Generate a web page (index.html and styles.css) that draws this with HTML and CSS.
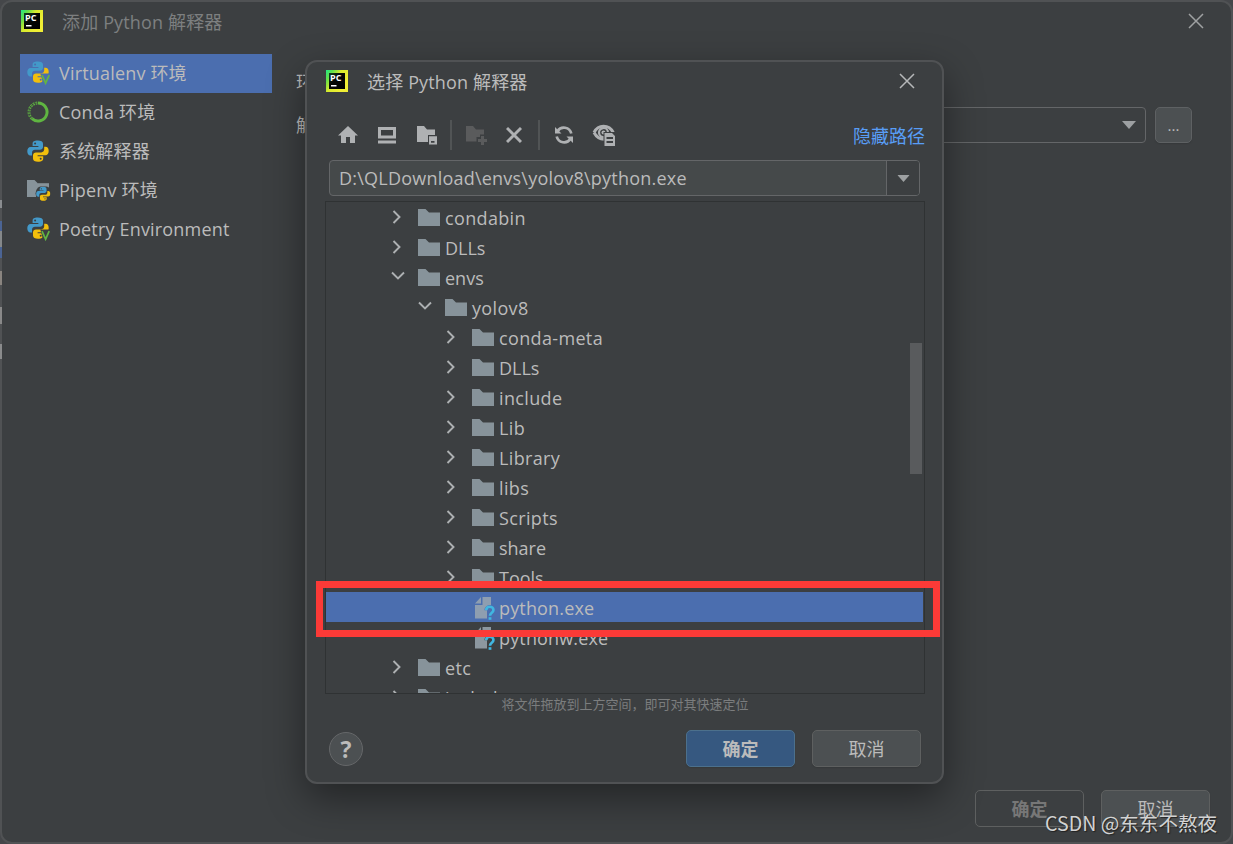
FILE: index.html
```
<!DOCTYPE html>
<html lang="zh-CN">
<head>
<meta charset="utf-8">
<title>添加 Python 解释器</title>
<link rel="stylesheet" href="styles.css">
</head>
<body>
<svg class="defs" width="0" height="0">
  <defs>
    <linearGradient id="pcg" x1="0" y1="0" x2="0.9" y2="0.6">
      <stop offset="0" stop-color="#21e789"/><stop offset="0.25" stop-color="#5fe04a"/><stop offset="0.55" stop-color="#d8ea2d"/><stop offset="1" stop-color="#f0ee35"/>
    </linearGradient>
    <linearGradient id="pcd" x1="0" y1="0" x2="1" y2="1">
      <stop offset="0" stop-color="#12401f"/><stop offset="0.4" stop-color="#050805"/><stop offset="1" stop-color="#000"/>
    </linearGradient>
    <symbol id="pycharm" viewBox="0 0 22 22">
      <rect width="22" height="22" fill="url(#pcg)"/>
      <rect x="3" y="3" width="16" height="16" fill="url(#pcd)"/>
      <rect x="5" y="15" width="5.500" height="1.500" fill="#fff"/>
    </symbol>
    <symbol id="py" viewBox="0 0 22 22">
      <path fill="#4399c9" d="M10.8 0.5C7 0.5 5.600 1.700 5.600 3.700V6H11.400V7H3.600C1.500 7 0.300 8.700 0.300 11.300C0.300 14 1.500 15.500 3.400 15.500H5V12.700C5 11 6.300 9.800 8 9.800H13C14.600 9.800 16 8.600 16 7V3.700C16 1.600 14 0.500 10.800 0.500Z"/>
      <circle cx="8.100" cy="3.500" r="1" class="eye"/>
      <path fill="#f2bf0c" d="M11 21.700C14.800 21.700 16.200 20.500 16.200 18.500V16.200H10.600V15.200H18.300C20.500 15.200 21.700 13.600 21.700 11C21.700 8.200 20.400 6.800 18.600 6.800H17.200V9.300C17.200 11 15.900 12.400 14.200 12.400H9C7.300 12.400 6 13.600 6 15.200V18.500C6 20.600 8 21.700 11 21.700Z"/>
      <circle cx="13.700" cy="18.700" r="1" class="eye"/>
    </symbol>
    <symbol id="pyv" viewBox="0 0 24 24">
      <use href="#py" width="22" height="22"/>
      <path d="M13.300 12.600H24V24H16.500Z" class="cut"/>
      <path d="M15 14.200L18.600 22.200L22.200 14.200" fill="none" stroke="#62b543" stroke-width="1.700"/>
    </symbol>
    <symbol id="conda" viewBox="0 0 22 22">
      <path d="M11 2A9 9 0 1 1 5 17.700" fill="none" stroke="#5fb541" stroke-width="3"/>
      <path d="M5 17.700A9 9 0 0 1 10.500 2" fill="none" stroke="#5fb541" stroke-width="2.800" stroke-dasharray="1.800 .9"/>
      <path d="M5 17.700A9 9 0 0 1 10 2" fill="none" stroke="#3c3f41" stroke-width="0.600"/>
    </symbol>
    <symbol id="folder" viewBox="0 0 22 17">
      <path d="M0 0H7.500L11 3.400H22V17H0Z" fill="#87939a"/>
    </symbol>
    <symbol id="right" viewBox="0 0 10 14"><path d="M1.500 1L7.500 7L1.500 13" fill="none" stroke="#adb0b2" stroke-width="1.900"/></symbol>
    <symbol id="down" viewBox="0 0 14 10"><path d="M1 1.500L7 7.500L13 1.500" fill="none" stroke="#adb0b2" stroke-width="1.900"/></symbol>
    <symbol id="unknown" viewBox="0 0 22 24">
      <path d="M1 7.500L7 1V7.500Z" fill="#9aa7b0" opacity=".85"/>
      <path d="M8.500 1H17V9C13 9 10.500 11 10.500 14.300H13V22.500H1V9H8.500Z" fill="#9aa7b0" opacity=".85"/>
      <path d="M12.200 14.200C12.200 9.600 19.400 9.700 19.400 13.900C19.400 17 16 16.500 16 19.800" fill="none" stroke="#40b6e0" stroke-width="2.700"/>
      <rect x="14.600" y="21.200" width="2.800" height="2.600" fill="#40b6e0"/>
    </symbol>
    <symbol id="cross" viewBox="0 0 16 16"><path d="M1 1L15 15M15 1L1 15" stroke="currentColor" stroke-width="1.500"/></symbol>
    <symbol id="caret" viewBox="0 0 14 8"><path d="M0 0H14L7 8Z" fill="#9da0a2"/></symbol>
  </defs>
</svg>

<div class="window">
  <header class="titlebar outer">
    <span class="logo"><svg width="22" height="22"><use href="#pycharm"/></svg><b>PC</b></span>
    <span class="title dim">添加 Python 解释器</span>
    <svg class="close" width="16" height="16"><use href="#cross"/></svg>
  </header>
  <main class="content">
    <nav class="side">
      <div class="env active"><svg width="24" height="24"><use href="#pyv"/></svg><span>Virtualenv 环境</span></div>
      <div class="env"><svg width="22" height="22"><use href="#conda"/></svg><span>Conda 环境</span></div>
      <div class="env"><svg width="22" height="22"><use href="#py"/></svg><span>系统解释器</span></div>
      <div class="env"><svg width="24" height="24" viewBox="0 0 24 24"><path d="M0 2H7.500L11 5.400H22V11L10 19H0Z" fill="#87939a"/><circle cx="16.500" cy="15.500" r="8" fill="#3c3f41"/><path d="M11 5.400H22V8.500H11Z" fill="#87939a"/><use href="#py" x="9" y="8.500" width="14.500" height="14.500"/></svg><span>Pipenv 环境</span></div>
      <div class="env"><svg width="24" height="24"><use href="#pyv"/></svg><span>Poetry Environment</span></div>
    </nav>
    <section class="form">
      <div class="label">环境</div>
      <div class="line"><span class="label">解释器</span><div class="combo"><svg width="14" height="8"><use href="#caret"/></svg></div><button class="more">...</button></div>
    </section>
  </main>
  <footer class="actions">
    <button class="btn disabled">确定</button>
    <button class="btn">取消</button>
  </footer>
</div>
<div class="edge"></div>

<div class="dialog">
  <header class="titlebar inner">
    <span class="logo"><svg width="22" height="22"><use href="#pycharm"/></svg><b>PC</b></span>
    <span class="title">选择 Python 解释器</span>
    <svg class="close" width="16" height="16"><use href="#cross"/></svg>
  </header>
  <div class="toolbar">
    <svg width="20" height="18" viewBox="0 0 20 18"><path d="M10 0L20 9.500H17V17H12V11H8V17H3V9.500H0Z" fill="#afb1b3"/></svg>
    <svg class="t2" width="18" height="18" viewBox="0 0 18 18"><path fill-rule="evenodd" d="M0 1H18V12.500H0ZM3 4V9.500H15V4ZM0 14.500H18V17.500H0Z" fill="#afb1b3"/></svg>
    <svg class="t3" width="20" height="20" viewBox="0 0 20 20"><path d="M0 1H7L10 4.500H18V10H11V17H0Z" fill="#afb1b3"/><path fill-rule="evenodd" d="M12 11.200H20V19.500H12ZM14 16V17.800H17.500V16Z" fill="#afb1b3"/></svg>
    <i class="sep"></i>
    <svg class="t4" width="22" height="20" viewBox="0 0 22 20"><path d="M0 1H7L10 4.500H18V9.500H14V12H10.500V16.500H0Z" fill="#5a5b5c"/><path d="M15 11H18V14H21V17H18V20H15V17H12V14H15Z" fill="#5a5b5c"/></svg>
    <svg class="t5" width="16" height="16" viewBox="0 0 16 16"><path d="M1 1L15 15M15 1L1 15" stroke="#afb1b3" stroke-width="2.900"/></svg>
    <i class="sep"></i>
    <svg class="t6" width="20" height="20" viewBox="0 0 20 20"><path d="M3.500 6.200A7.600 7.600 0 0 1 17.300 8.500M16.500 13.800A7.600 7.600 0 0 1 2.700 11.500" fill="none" stroke="#afb1b3" stroke-width="2.700"/><path d="M1 2V8.500H7.500ZM19 18V11.500H12.500Z" fill="#afb1b3"/></svg>
    <svg class="t7" width="24" height="22" viewBox="0 0 24 22"><path d="M2 8.500C4.500 3.800 8.500 2.300 11.500 2.300C15 2.300 19 4 21.200 8.500M2 8.500C4.500 13 8 15.200 12 15.200" fill="none" stroke="#afb1b3" stroke-width="3"/><path d="M12 13A4.500 4.500 0 1 1 16 8" fill="none" stroke="#afb1b3" stroke-width="2.200"/><circle cx="11.500" cy="8.500" r="2" fill="#afb1b3"/><rect x="11.500" y="8" width="12.500" height="14" fill="#3c3f41"/><path fill-rule="evenodd" d="M12.500 9H20L23 12V22H12.500ZM14.500 13V15H21V13ZM14.500 17V19H21V17Z" fill="#afb1b3"/></svg>
    <a class="hide">隐藏路径</a>
  </div>
  <div class="path"><span>D:\QLDownload\envs\yolov8\python.exe</span><div class="drop"><svg width="13" height="7" viewBox="0 0 14 8"><use href="#caret"/></svg></div></div>
  <div class="tree">
    <div class="row"><svg class="chev" width="10" height="14"><use href="#right"/></svg><svg class="fold" width="22" height="17"><use href="#folder"/></svg><span>condabin</span></div>
    <div class="row"><svg class="chev" width="10" height="14"><use href="#right"/></svg><svg class="fold" width="22" height="17"><use href="#folder"/></svg><span class="tight">DLLs</span></div>
    <div class="row"><svg class="chev open" width="14" height="10"><use href="#down"/></svg><svg class="fold" width="22" height="17"><use href="#folder"/></svg><span class="tight">envs</span></div>
    <div class="row l1"><svg class="chev open" width="14" height="10"><use href="#down"/></svg><svg class="fold" width="22" height="17"><use href="#folder"/></svg><span>yolov8</span></div>
    <div class="row l2"><svg class="chev" width="10" height="14"><use href="#right"/></svg><svg class="fold" width="22" height="17"><use href="#folder"/></svg><span>conda-meta</span></div>
    <div class="row l2"><svg class="chev" width="10" height="14"><use href="#right"/></svg><svg class="fold" width="22" height="17"><use href="#folder"/></svg><span class="tight">DLLs</span></div>
    <div class="row l2"><svg class="chev" width="10" height="14"><use href="#right"/></svg><svg class="fold" width="22" height="17"><use href="#folder"/></svg><span>include</span></div>
    <div class="row l2"><svg class="chev" width="10" height="14"><use href="#right"/></svg><svg class="fold" width="22" height="17"><use href="#folder"/></svg><span>Lib</span></div>
    <div class="row l2"><svg class="chev" width="10" height="14"><use href="#right"/></svg><svg class="fold" width="22" height="17"><use href="#folder"/></svg><span>Library</span></div>
    <div class="row l2"><svg class="chev" width="10" height="14"><use href="#right"/></svg><svg class="fold" width="22" height="17"><use href="#folder"/></svg><span>libs</span></div>
    <div class="row l2"><svg class="chev" width="10" height="14"><use href="#right"/></svg><svg class="fold" width="22" height="17"><use href="#folder"/></svg><span>Scripts</span></div>
    <div class="row l2"><svg class="chev" width="10" height="14"><use href="#right"/></svg><svg class="fold" width="22" height="17"><use href="#folder"/></svg><span class="tight">share</span></div>
    <div class="row l2"><svg class="chev" width="10" height="14"><use href="#right"/></svg><svg class="fold" width="22" height="17"><use href="#folder"/></svg><span class="tight">Tools</span></div>
    <div class="row file selected"><svg width="22" height="24"><use href="#unknown"/></svg><span>python.exe</span></div>
    <div class="row file"><svg width="22" height="24"><use href="#unknown"/></svg><span>pythonw.exe</span></div>
    <div class="row"><svg class="chev" width="10" height="14"><use href="#right"/></svg><svg class="fold" width="22" height="17"><use href="#folder"/></svg><span>etc</span></div>
    <div class="row"><svg class="chev" width="10" height="14"><use href="#right"/></svg><svg class="fold" width="22" height="17"><use href="#folder"/></svg><span>include</span></div>
    <div class="thumb"></div>
  </div>
  <p class="hint">将文件拖放到上方空间，即可对其快速定位</p>
  <div class="buttons">
    <button class="help">?</button>
    <button class="btn primary">确定</button>
    <button class="btn">取消</button>
  </div>
</div>
<div class="marker"></div>
<div class="watermark">CSDN @东东不熬夜</div>
</body>
</html>
```
FILE: styles.css
```
* { box-sizing: border-box; }
body {
  margin: 0;
  width: 1233px;
  height: 844px;
  position: relative;
  overflow: hidden;
  background: #45474a;
  color: #bbbbbb;
  font: 18px/26px "Open Sans", "Noto Sans CJK SC", sans-serif;
}
svg { display: block; flex: none; }
.defs { position: absolute; }
button { font: inherit; color: inherit; padding: 0; }
.window {
  width: 1233px;
  height: 844px;
  border: 2px solid #505254;
  border-radius: 12px;
  background: #3c3f41;
  display: flex;
  flex-direction: column;
}
.titlebar { display: flex; align-items: center; height: 40px; padding: 0 27px 0 19px; }
.logo { position: relative; width: 22px; height: 22px; flex: none; }
.logo b {
  position: absolute;
  left: 4px;
  top: 3px;
  font: 700 9px/10px "Open Sans", sans-serif;
  color: #fff;
}
.title { margin-left: 19px; letter-spacing: 0.15px; white-space: nowrap; padding-top: 2px; }
.title.dim { color: #7d7f80; }
.close { margin-left: auto; color: #9fa1a2; }
.outer { height: 38px; }
.content { display: flex; flex: 1; padding-top: 14px; }
.side { width: 252px; margin-left: 18px; }
.env {
  --row: #3c3f41;
  height: 39px;
  display: flex;
  align-items: center;
  padding: 0 0 2px 7px;
  letter-spacing: 0.18px;
}
.env svg { margin-right: 10px; }
.env svg[width="24"] { margin-right: 8px; }
.active { --row: #4b6eaf; background: #4b6eaf; }
.cut, .eye { fill: var(--row); }
.form { flex: 1; margin-left: 24px; padding-top: 15px; }
.line { display: flex; align-items: center; margin-top: 12px; height: 36px; }
.form .line .label { width: 60px; }
.combo {
  width: 790px;
  height: 36px;
  border: 1px solid #646668;
  border-radius: 4px;
  display: flex;
  align-items: center;
  justify-content: flex-end;
  padding-right: 9px;
}
.more {
  margin-left: 9px;
  width: 37px;
  height: 36px;
  border: 1px solid #5e6163;
  border-radius: 5px;
  background: #4c5052;
  font-size: 15px;
  box-shadow: 0 1px 1px #36393b;
}
.actions { display: flex; gap: 17px; justify-content: flex-end; padding: 0 21px 15px 0; }
.btn {
  width: 109px;
  height: 37px;
  border: 1px solid #5e6060;
  border-radius: 5px;
  background: #4c5052;
  box-shadow: 0 1px 1px #36393b;
}
.disabled { background: transparent; color: #777777; font-weight: 700; box-shadow: none; }
.edge {
  position: absolute;
  left: 0;
  top: 200px;
  width: 2px;
  height: 160px;
  background: linear-gradient(#8a8d90 0 8px, transparent 0 21px, #4b6494 0 31px, #85888a 0 47px, #4b6494 0 58px, transparent 0 71px, #8a8580 0 85px, transparent 0 107px, #898989 0 124px, transparent 0 144px, #8a8b8c 0 159px, transparent 0);
}
.dialog {
  position: absolute;
  left: 305px;
  top: 60px;
  width: 639px;
  height: 724px;
  border: 2px solid #505254;
  border-radius: 12px;
  background: #3c3f41;
  box-shadow: 0 14px 38px rgba(0, 0, 0, .42);
  display: flex;
  flex-direction: column;
}
.inner { height: 38px; }
.inner .close { color: #b6b8b9; }
.toolbar { display: flex; align-items: center; height: 60px; padding: 9px 17px 0 31px; }
.t2 { margin-left: 20px; }
.t3 { margin-left: 21px; }
.sep { width: 2px; height: 30px; background: #515455; margin-left: 13px; }
.t4 { margin-left: 14px; }
.t5 { margin-left: 18px; }
.t5 + .sep { margin-left: 16px; }
.t6 { margin-left: 14px; }
.t7 { margin-left: 18px; }
.hide { margin-left: auto; color: #589df6; padding-top: 3px; }
.path {
  width: 591px;
  height: 36px;
  margin: 0 0 0 22px;
  border: 1px solid #646668;
  border-radius: 4px;
  background: #45494a;
  display: flex;
  align-items: center;
  padding: 0 0 1px 9px;
  letter-spacing: 0.22px;
}
.drop {
  margin: 1px 0 0 auto;
  width: 33px;
  height: 34px;
  border-left: 1px solid #646668;
  background: #3c3f41;
  border-radius: 0 3px 3px 0;
  display: flex;
  align-items: center;
  justify-content: center;
}
.tree {
  position: relative;
  width: 600px;
  height: 493px;
  margin: 5px 0 0 18px;
  border: 1px solid #2f3233;
  overflow: hidden;
}
.row { height: 30px; display: flex; align-items: center; padding-left: 66px; }
.row span { padding-top: 2px; letter-spacing: 0.35px; }
.row .tight { letter-spacing: 0; }
.file span { letter-spacing: 0.15px; }
.chev { margin-right: 16px; }
.chev.open { margin: 0 13px 2px -1px; }
.fold { margin-right: 5px; }
.l1 { padding-left: 93px; }
.l2 { padding-left: 120px; }
.file { padding-left: 148px; }
.file svg { margin-right: 3px; margin-top: 2px; }
.selected { background: #4b6eaf; width: 597px; }
.thumb { position: absolute; right: 2px; top: 141px; width: 12px; height: 131px; background: #595b5d; }
.hint { margin: 0; padding-left: 1px; text-align: center; font-size: 13px; line-height: 21px; color: #7b7d7e; }
.buttons { display: flex; align-items: center; padding: 15px 21px 0 22px; }
.help {
  width: 34px;
  height: 34px;
  border: 1px solid #656769;
  border-radius: 50%;
  background: #4c5052;
  font-weight: 700;
  font-size: 23px;
  line-height: 30px;
  margin-right: auto;
}
.primary { background: #365880; border-color: #4c708c; font-weight: 700; margin-right: 17px; }
.marker { position: absolute; left: 316px; top: 581px; width: 624px; height: 56px; border: 7px solid #fb3a37; }
.watermark {
  position: absolute;
  left: 1045px;
  top: 809px;
  font: 19.600px/27px "Noto Sans CJK SC", sans-serif;
  color: #d2d3d3;
  text-shadow: 1px 1px 1px #222;
  white-space: nowrap;
}
```
